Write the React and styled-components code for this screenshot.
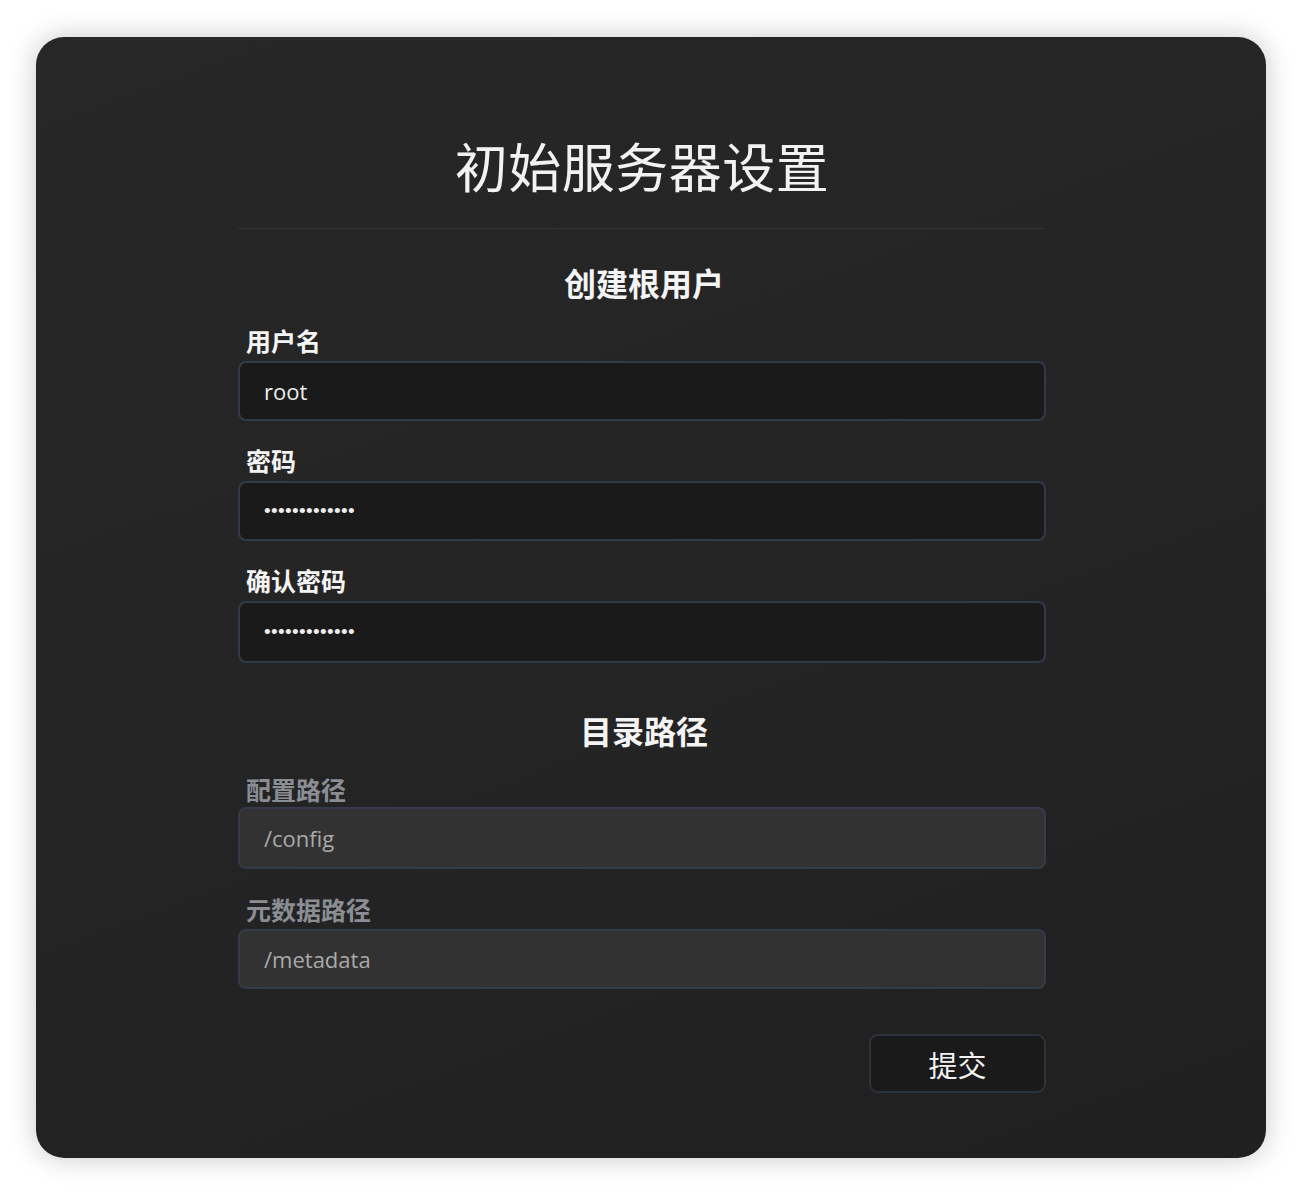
import React from 'react'
import styled, { createGlobalStyle } from 'styled-components'

const GlobalStyle = createGlobalStyle`
  html, body {
    margin: 0;
    padding: 0;
    background: #ffffff;
  }
  body {
    font-family: 'Noto Sans CJK SC', 'Open Sans', sans-serif;
  }
`

const cjk = `'Noto Sans CJK SC', 'Noto Sans', sans-serif`
const latin = `'Open Sans', 'Noto Sans CJK SC', sans-serif`

const Page = styled.div`
  padding: 37px 36px 36px 36px;
  min-height: 1194px;
  box-sizing: border-box;
`

const Window = styled.div`
  width: 1230px;
  height: 1121px;
  box-sizing: border-box;
  border-radius: 28px;
  background: linear-gradient(160deg, #272727 0%, #242424 55%, #202020 100%);
  box-shadow: 0 0 28px rgba(0, 0, 0, 0.22), 0 -1px 0 #ffffff;
  padding: 97px 18px 0 0;
  display: flex;
  flex-direction: column;
  align-items: center;
`

const Form = styled.div`
  width: 808px;
  display: flex;
  flex-direction: column;
`

const Title = styled.h1`
  margin: 0;
  font-family: ${cjk};
  font-weight: 400;
  font-size: 53px;
  line-height: 62px;
  color: #f2f2f2;
  text-align: center;
  letter-spacing: 0.5px;
`

const Divider = styled.hr`
  margin: 32px 0 0 0;
  border: none;
  height: 1px;
  background: #343434;
`

const Section = styled.h2`
  margin: ${p => p.$top}px 0 0 4px;
  font-family: ${cjk};
  font-weight: 700;
  font-size: 32px;
  line-height: 40px;
  color: #f4f4f4;
  text-align: center;
`

const Label = styled.label`
  display: block;
  margin: ${p => p.$top}px 0 0 8px;
  font-family: ${cjk};
  font-weight: 700;
  font-size: 25px;
  line-height: 28px;
  color: ${p => (p.$muted ? '#8a8e94' : '#f4f4f4')};
`

const Input = styled.input`
  display: block;
  width: 100%;
  height: ${p => p.$h || 60}px;
  margin-top: ${p => p.$gap || 7}px;
  box-sizing: border-box;
  padding: 0 24px;
  border: 2px solid ${p => (p.disabled ? '#353b47' : '#333a47')};
  border-radius: 8px;
  background: ${p => (p.disabled ? '#323232' : '#1a1a1a')};
  color: ${p => (p.disabled ? '#a9a9a9' : '#ededed')};
  font-family: ${latin};
  font-size: 22px;
  outline: none;
  &[type='password'] {
    font-family: 'Liberation Sans', sans-serif;
    font-size: 19px;
    letter-spacing: 0.35px;
  }
`

const Actions = styled.div`
  display: flex;
  justify-content: flex-end;
  margin-top: 45px;
`

const SubmitButton = styled.button`
  width: 177px;
  height: 59px;
  border: 2px solid #2d333d;
  border-radius: 9px;
  background: #1a1a1a;
  color: #f2f2f2;
  font-family: ${cjk};
  font-size: 29px;
  cursor: pointer;
  padding: 0;
`

const Field = ({ label, top, value, type, muted, disabled, h, gap }) => (
  <>
    <Label $top={top} $muted={muted}>{label}</Label>
    <Input
      type={type || 'text'}
      defaultValue={value}
      readOnly
      disabled={disabled}
      $h={h}
      $gap={gap}
    />
  </>
)

export default function App() {
  return (
    <>
      <GlobalStyle />
      <Page>
        <Window>
          <Form>
            <Title>初始服务器设置</Title>
            <Divider />
            <Section $top={33}>创建根用户</Section>
            <Field label="用户名" top={24} value="root" />
            <Field label="密码" top={25} value="rootpassword1" type="password" />
            <Field label="确认密码" top={25} value="rootpassword1" type="password" h={62} />
            <Section $top={47}>目录路径</Section>
            <Field label="配置路径" top={25} value="/config" muted disabled h={62} gap={4} />
            <Field label="元数据路径" top={26} value="/metadata" muted disabled gap={6} />
            <Actions>
              <SubmitButton>提交</SubmitButton>
            </Actions>
          </Form>
        </Window>
      </Page>
    </>
  )
}
